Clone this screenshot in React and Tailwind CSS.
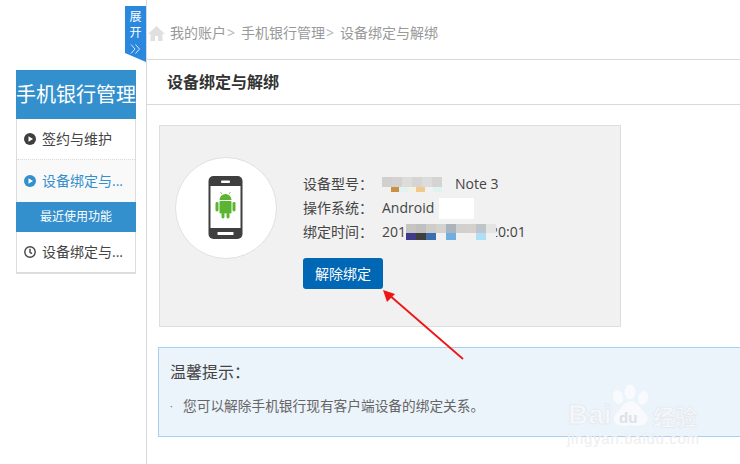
const CN = { fontFamily: '"Open Sans","Noto Sans CJK SC",sans-serif' };

function Blocks({ top, bottom, w = 10, h = 10, bh = 5, className = "" }) {
  return (
    <span className={"inline-flex flex-col align-top " + className}>
      <span className="flex">
        {top.map((c, i) => <span key={i} style={{ background: c, width: w, height: h }} />)}
      </span>
      <span className="flex">
        {bottom.map((c, i) => <span key={i} style={{ background: c, width: w, height: bh }} />)}
      </span>
    </span>
  );
}

function Play({ color }) {
  return (
    <svg width="12" height="12" viewBox="0 0 12 12" className="shrink-0">
      <circle cx="6" cy="6" r="6" fill={color} />
      <path d="M4.5 3.2 L9 6 L4.5 8.8 Z" fill="#fff" />
    </svg>
  );
}

function Clock() {
  return (
    <svg width="12" height="12" viewBox="0 0 12 12" fill="none" stroke="#444" strokeWidth="1.4" className="shrink-0">
      <circle cx="6" cy="6" r="5.2" />
      <path d="M6 2.8 V6.3 L8 7.6" />
    </svg>
  );
}

function Phone() {
  return (
    <svg width="36" height="64" viewBox="0 0 36 64">
      <rect x="0.5" y="0" width="34" height="63" rx="5" fill="#3f3f3f" />
      <rect x="2.5" y="10" width="30" height="42" fill="#fff" />
      <rect x="13" y="4.5" width="9" height="2.5" rx="1" fill="#fff" />
      <rect x="9.5" y="56" width="16" height="3" rx="0.5" fill="#fff" />
      <path d="M11.5 24 a6 6 0 0 1 12 0 Z" fill="#5cb531" />
      <path d="M14 18 l-1.5 -2 M21 18 l1.5 -2" stroke="#5cb531" strokeWidth="0.7" />
      <rect x="11.5" y="25" width="12" height="12.5" rx="1" fill="#5cb531" />
      <rect x="7.5" y="26" width="3" height="9.5" rx="1.4" fill="#5cb531" />
      <rect x="24.5" y="26" width="3" height="9.5" rx="1.4" fill="#5cb531" />
      <rect x="13.5" y="37" width="3" height="5.5" rx="1.4" fill="#5cb531" />
      <rect x="18.5" y="37" width="3" height="5.5" rx="1.4" fill="#5cb531" />
    </svg>
  );
}

function SideItem({ icon, label, className = "" }) {
  return (
    <div className={"flex items-center gap-[6px] pl-[7px] text-sm overflow-hidden whitespace-nowrap " + className}>
      {icon}
      <span>{label}</span>
    </div>
  );
}

function InfoRow({ label, children }) {
  return (
    <div className="flex h-6 items-center">
      <span className="w-[79px]">{label}</span>
      <span className="flex items-center">{children}</span>
    </div>
  );
}

export default function App() {
  return (
    <div className="relative flex w-[740px] h-[464px] overflow-hidden bg-white text-[#333]" style={CN}>
      <aside className="w-[147px] shrink-0 border-r border-[#d9d9d9] pl-4 pt-[70px]">
        <div className="w-[120px] border-x border-b-2 border-[#dcdcdc]">
          <div className="-mx-px h-[49px] bg-[#348fcd] text-white text-[20px] leading-[50px] text-center whitespace-nowrap">手机银行管理</div>
          <SideItem icon={<Play color="#3f3f3f" />} label="签约与维护" className="h-[40px] text-[#444]" />
          <SideItem icon={<Play color="#348fcd" />} label="设备绑定与..." className="h-[43px] bg-[#f9f9f9] border-t border-dotted border-[#ddd] text-[#348fcd]" />
          <div className="-mx-px h-[30px] bg-[#348fcd] text-white text-xs leading-[30px] text-center">最近使用功能</div>
          <SideItem icon={<Clock />} label="设备绑定与..." className="h-[40px] text-[#444]" />
        </div>
      </aside>

      <main className="flex-1 min-w-0">
        <div className="h-[60px] border-b border-[#d9d9d9] flex items-center pt-[7px] text-sm text-[#999] whitespace-nowrap">
          <svg width="17" height="15" viewBox="0 0 17 15" className="ml-[1px] mr-[5px] shrink-0">
            <path d="M8.5 0 L17 8 H14.5 V15 H10 V10 H7 V15 H2.5 V8 H0 Z" fill="#e0e0e0" />
          </svg>
          <span>我的账户</span>
          <span className="ml-px mr-[6px] text-[#b5b5b5]">&gt;</span>
          <span>手机银行管理</span>
          <span className="ml-px mr-[6px] text-[#b5b5b5]">&gt;</span>
          <span>设备绑定与解绑</span>
        </div>

        <div className="h-[45px] border-b border-[#d9d9d9] pl-[20px] flex items-center font-bold text-base text-[#333]">设备绑定与解绑</div>

        <div className="ml-[12px] mt-[20px] w-[462px] h-[202px] bg-[#f1f1f1] border border-[#dedede] flex pl-[15px] pt-[31px]">
          <div className="size-[102px] shrink-0 rounded-full bg-white border border-[#e0e0e0] flex items-center justify-center">
            <Phone />
          </div>
          <div className="ml-[26px] pt-[15px] text-sm text-[#444]">
            <InfoRow label="设备型号：">
              <Blocks top={["#d2d0ce","#d4d2d0","#dcdcda","#d7d5d3","#dcdcdc","#d6d4d2"]} bottom={["#f1f1f1","#cb8f42","#e0f3f0","#f3f1e0","#f2c98d","#f1f1f1","#e0f3f0"]} className="w-[60px]" />
              <span className="ml-[13px]">Note 3</span>
            </InfoRow>
            <InfoRow label="操作系统：">
              <span>Android</span>
              <span className="ml-[5px] w-[35px] h-[21px] bg-white" />
            </InfoRow>
            <InfoRow label="绑定时间：">
              <span>201</span>
              <Blocks h={9} bh={7} className="relative z-10" top={["#c8c4c0","#c0c0c0","#cfcdca","#d4d2ce","#abb4bc","#d2d0ce","#d4d0cc","#c0c5c9","#e4e4e2"]} bottom={["#3f3a8c","#3f3f3f","#3c6fb0","#f1f1f1","#70aee2","#f1f1f1","#f1f1f1","#aee0f5","#f1f1f1"]} />
              <span className="-ml-[6px]">20:01</span>
            </InfoRow>
            <button className="mt-[14px] w-[80px] h-[31px] rounded-[3px] bg-[#0067b5] text-white text-sm block">解除绑定</button>
          </div>
        </div>

        <div className="ml-[11px] mt-[20px] h-[90px] bg-[#ebf3fb] border border-[#a8d0f2] border-r-0 pl-[11px] pt-[12px]">
          <div className="text-base leading-[24px] text-[#444]">温馨提示：</div>
          <div className="mt-[10px] flex items-center text-[13.7px] leading-[24px] text-[#666] whitespace-nowrap">
            <span className="w-[13px] text-[10px]">·</span>
            <span>您可以解除手机银行现有客户端设备的绑定关系。</span>
          </div>
        </div>
      </main>

      {/* collapsed-menu tab */}
      <div className="absolute left-[125px] top-[6px] w-[21px] h-[56px] bg-[#2a88de] text-white text-xs leading-[16px] text-center pt-[3px]" style={{ clipPath: "polygon(0 0,100% 0,100% 100%,0 47px)" }}>
        <div>展</div>
        <div>开</div>
        <svg width="11" height="10" viewBox="0 0 11 10" fill="none" stroke="#fff" strokeWidth="0.9" className="mx-auto mt-[3px] opacity-90">
          <path d="M1 0.5 L5 5 L1 9.5 M5.5 0.5 L9.5 5 L5.5 9.5" />
        </svg>
      </div>

      {/* red annotation arrow */}
      <svg className="absolute left-[380px] top-[288px]" width="90" height="76" viewBox="0 0 90 76">
        <path d="M8 6 L83 71" stroke="#f01515" strokeWidth="1.8" />
        <path d="M3 2 L15 6 L7 14 Z" fill="#f01515" />
      </svg>

      {/* watermark */}
      <div className="absolute left-[565px] top-[383px] w-[175px] h-[75px] pointer-events-none" style={{ fontFamily: '"Liberation Sans",sans-serif' }}>
        <svg className="absolute left-[40px] top-0" width="50" height="48" viewBox="0 0 50 48" fill="#f8fafd">
          <ellipse cx="13" cy="14" rx="5" ry="7" transform="rotate(-15 13 14)" />
          <ellipse cx="25" cy="9" rx="5.5" ry="7.5" />
          <ellipse cx="38" cy="15" rx="5" ry="7" transform="rotate(15 38 15)" />
          <path d="M14 27 Q20 18 26 18 Q32 18 37 27 Q46 34 41 40 Q36 44 26 42 Q14 44 10 40 Q6 34 14 27 Z" />
        </svg>
        <div className="absolute left-[3px] top-[16px] w-[50px] text-[28px] font-bold leading-[32px] text-[#f5f7fa]" style={{ WebkitTextStroke: "0.5px #dfe3e8" }}>Bai</div>
        <div className="absolute left-[54px] top-[26px] text-[15px] font-bold leading-[18px] text-[#dde1e6]">du</div>
        <div className="absolute left-[88px] top-[20px] text-[22px] font-bold leading-[26px] text-[#f5f7fa]" style={{ ...CN, WebkitTextStroke: "0.4px #dfe3e8" }}>经验</div>
        <div className="absolute left-[2px] top-[47px] text-[15px] leading-[18px] text-[#eeeeee] whitespace-nowrap tracking-[0.7px]">jingyan.baidu.com</div>
      </div>
    </div>
  );
}
